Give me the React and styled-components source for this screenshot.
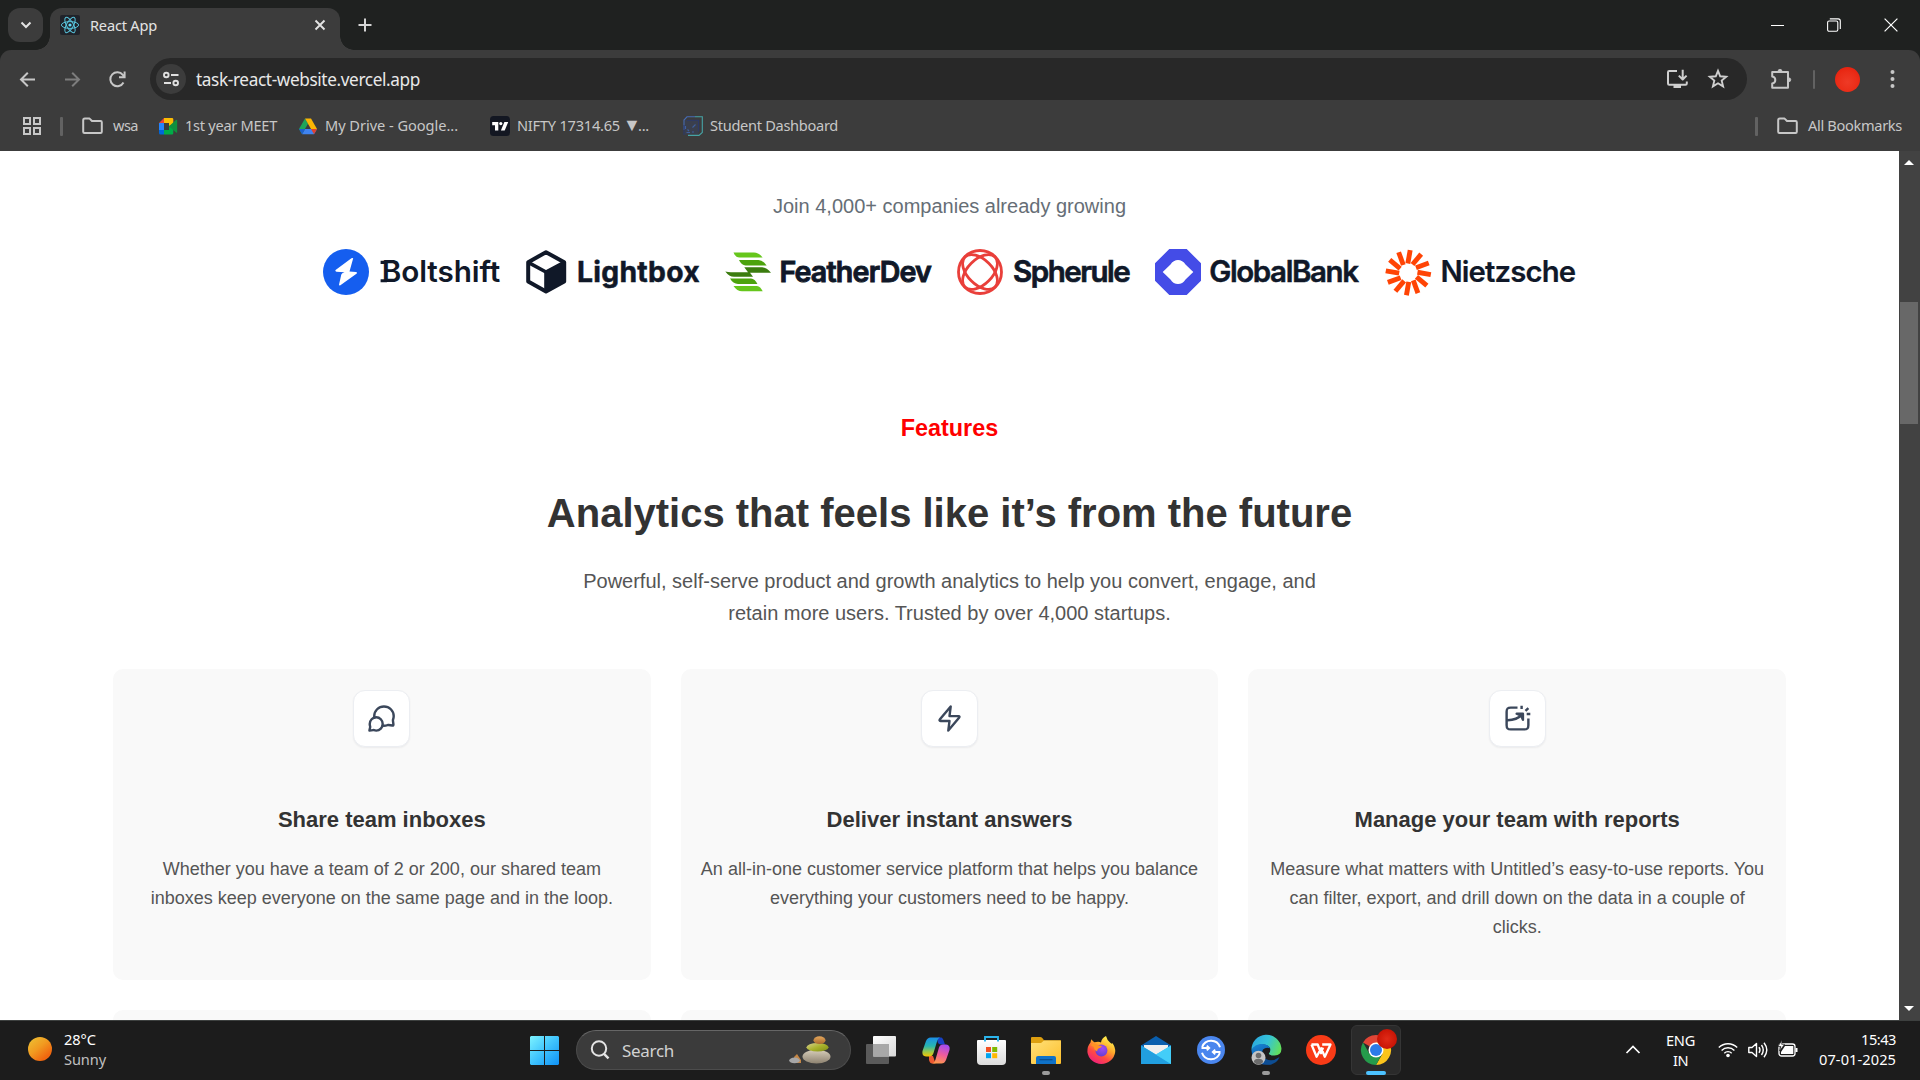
import React, { useLayoutEffect, useRef, useState } from "react";
import styled, { createGlobalStyle } from "styled-components";

const GlobalStyle = createGlobalStyle`
  * { box-sizing: border-box; }
  body { margin: 0; background: #fff; overflow: hidden; }
  svg { display: block; flex: none; overflow: visible; }
`;

const uiFont = `"Segoe UI", "Noto Sans", "Open Sans", sans-serif`;
const pageFont = `Arial, "Liberation Sans", sans-serif`;

const Screen = styled.div`
  width: 1920px;
  height: 1080px;
  display: flex;
  flex-direction: column;
  overflow: hidden;
  font-family: ${uiFont};
`;

/* ---------- text that keeps a fixed measure ---------- */
const LabelText = styled.span`
  display: block;
  width: max-content;
  white-space: nowrap;
  flex: none;
  font-size: ${(p) => p.$size || 14.6}px;
  line-height: 20px;
  color: ${(p) => p.$color || "#c7c7c7"};
  margin-left: ${(p) => p.$left || 0}px;
  transform: translateY(${(p) => p.$shift || 0}px);
`;

function Label({ width, size, color, left, shift, children }) {
  const ref = useRef(null);
  const [spacing, setSpacing] = useState(0);
  useLayoutEffect(() => {
    const natural = ref.current.getBoundingClientRect().width;
    setSpacing((width - natural) / children.length);
  }, [width, children]);
  return (
    <LabelText ref={ref} $size={size} $color={color} $left={left} $shift={shift} style={{ letterSpacing: spacing }}>
      {children}
    </LabelText>
  );
}

/* ---------- browser chrome ---------- */
const TabStrip = styled.div`
  height: 50px;
  flex: none;
  background: #1f2120;
  display: flex;
  padding: 8px 0 0 8px;
`;
const TabSearch = styled.div`
  width: 35px;
  height: 34px;
  border-radius: 12px;
  background: #3c3c3c;
  display: flex;
  align-items: center;
  justify-content: center;
`;
const Tab = styled.div`
  position: relative;
  width: 290px;
  height: 42px;
  margin-left: 7px;
  padding: 0 14px 8px 10px;
  border-radius: 12px 12px 0 0;
  background: #3c3c3c;
  display: flex;
  align-items: center;
  gap: 10px;
  &::before,
  &::after {
    content: "";
    position: absolute;
    bottom: 0;
    width: 14px;
    height: 14px;
  }
  &::before {
    left: -14px;
    background: radial-gradient(circle at 0 0, transparent 13.5px, #3c3c3c 14px);
  }
  &::after {
    right: -14px;
    background: radial-gradient(circle at 100% 0, transparent 13.5px, #3c3c3c 14px);
  }
`;
const Spacer = styled.div`
  flex: 1;
`;
const NewTab = styled.div`
  width: 50px;
  height: 34px;
  display: flex;
  align-items: center;
  justify-content: center;
`;
const WindowButtons = styled.div`
  display: flex;
  height: 34px;
  margin-left: auto;
  padding-right: 1px;
`;
const WindowButton = styled.div`
  width: ${(p) => p.$width || 57}px;
  display: flex;
  align-items: center;
  justify-content: center;
`;
const ChromeBack = styled.div`
  background: #1f2120;
  flex: none;
`;
const Toolbar = styled.div`
  height: 58px;
  border-radius: 11px 11px 0 0;
  background: #3c3c3c;
  display: flex;
  align-items: center;
  padding: 0 20px 0 17px;
`;
const NavButtons = styled.div`
  display: flex;
  width: 133px;
  gap: 24px;
`;
const UrlBar = styled.div`
  width: 1597px;
  height: 42px;
  border-radius: 21px;
  background: #282828;
  display: flex;
  align-items: center;
  padding: 0 18px 0 6px;
`;
const SiteInfo = styled.div`
  width: 30px;
  height: 30px;
  border-radius: 50%;
  background: #3c3c3c;
  display: flex;
  align-items: center;
  justify-content: center;
`;
const UrlActions = styled.div`
  display: flex;
  gap: 19px;
  margin-left: auto;
`;
const ToolbarEnd = styled.div`
  flex: 1;
  display: flex;
  align-items: center;
  padding-left: 23px;
`;
const Divider = styled.div`
  width: ${(p) => p.$width}px;
  height: 19px;
  border-radius: 1px;
  background: #626262;
  margin-left: ${(p) => p.$left || 0}px;
`;
const Avatar = styled.div`
  width: 25px;
  height: 25px;
  border-radius: 50%;
  margin: 0 26px 0 20px;
  background: radial-gradient(circle at 50% 60%, #ee3a26 0, #ea2d18 50%, #e51a08 100%);
`;
const Bookmarks = styled.div`
  height: 43px;
  background: #3c3c3c;
  display: flex;
  align-items: center;
  padding: 0 18px 7px 23px;
`;
const Bookmark = styled.div`
  display: flex;
  align-items: center;
  margin-left: ${(p) => p.$left}px;
`;

/* ---------- page ---------- */
const Viewport = styled.div`
  height: 869px;
  flex: none;
  display: flex;
`;
const Page = styled.main`
  width: 1899px;
  height: 869px;
  overflow: hidden;
  background: #fff;
  font-family: ${pageFont};
  text-align: center;
  display: flex;
  flex-direction: column;
  align-items: center;
  padding-top: 39px;
`;
const Join = styled.p`
  margin: 0;
  font-size: 20px;
  line-height: 32px;
  color: #666e76;
`;
const Logos = styled.div`
  display: flex;
  gap: 24px;
  margin-top: 25px;
`;
const Eyebrow = styled.h3`
  margin: 113px 0 0;
  font-size: 23.4px;
  line-height: 36px;
  color: #ff0000;
`;
const Heading = styled.h2`
  margin: 43px 0 0;
  font-size: 40px;
  line-height: 48px;
  color: #333;
`;
const Lead = styled.p`
  width: 750px;
  margin: 28px 0 40px;
  font-size: 20px;
  line-height: 32px;
  color: #555;
`;
const Cards = styled.div`
  width: 1673px;
  flex: none;
  display: grid;
  grid-template-columns: repeat(3, 1fr);
  grid-auto-rows: 311px;
  gap: 30px;
`;
const Card = styled.article`
  border-radius: 10px;
  background: #f9f9f9;
  padding: 21px 18px;
  display: flex;
  flex-direction: column;
  align-items: center;
`;
const IconBox = styled.div`
  width: 57px;
  height: 57px;
  flex: none;
  border: 1px solid #eceef2;
  border-radius: 12px;
  background: #fff;
  box-shadow: 0 1px 2px rgba(16, 24, 40, 0.06);
  display: flex;
  align-items: center;
  justify-content: center;
`;
const CardTitle = styled.h4`
  margin: 58px 0 0;
  font-size: 22px;
  line-height: 30px;
  color: #333;
`;
const CardText = styled.p`
  margin: 20px 0 0;
  font-size: 18px;
  line-height: 29px;
  color: #555;
`;
const ScrollTrack = styled.div`
  width: 21px;
  background: #424242;
  display: flex;
  flex-direction: column;
  align-items: center;
  padding: 9px 1px 9px 0;
`;
const ScrollThumb = styled.div`
  width: 18px;
  height: 122px;
  margin-top: 137px;
  background: #686868;
`;
const Arrow = styled.div`
  border: 5px solid transparent;
  border-${(p) => (p.$up ? "top" : "bottom")}: 0;
  border-${(p) => (p.$up ? "bottom" : "top")}: 5px solid #fff;
  margin-top: ${(p) => (p.$up ? 0 : "auto")};
`;

/* ---------- taskbar ---------- */
const Taskbar = styled.footer`
  height: 60px;
  flex: none;
  background: #1c1c1c;
  border-top: 1px solid #3d403f;
  display: flex;
  align-items: center;
  padding-bottom: 1px;
`;
const Weather = styled.div`
  width: 530px;
  padding-left: 28px;
  display: flex;
  align-items: center;
  gap: 12px;
`;
const Sun = styled.div`
  width: 24px;
  height: 24px;
  border-radius: 50%;
  margin-top: -3px;
  background: linear-gradient(140deg, #ecc033 5%, #f19a20 45%, #f0660f 80%);
`;
const Stack = styled.div`
  display: flex;
  flex-direction: column;
  align-items: ${(p) => p.$align || "flex-start"};
  margin-left: ${(p) => p.$left || 0}px;
`;
const SearchBox = styled.div`
  width: 275px;
  height: 40px;
  margin-left: 17px;
  margin-right: 2.5px;
  border-radius: 20px;
  border: 1px solid #4c4c4c;
  border-top-color: #666;
  background: #3b3b3b;
  display: flex;
  align-items: center;
  padding: 0 19px 0 13px;
`;
const AppSlot = styled.div`
  position: relative;
  width: 55px;
  height: 58px;
  display: flex;
  align-items: center;
  justify-content: center;
  &::after {
    content: "";
    display: ${(p) => (p.$mark ? "block" : "none")};
    position: absolute;
    bottom: 4px;
    width: ${(p) => (p.$mark === "active" ? 20 : 8)}px;
    height: 4px;
    border-radius: 2px;
    background: ${(p) => (p.$mark === "active" ? "#4cc2ff" : "#9a9a9a")};
  }
`;
const ActiveTile = styled.div`
  width: 50px;
  height: 50px;
  border-radius: 6px;
  border: 1px solid #353535;
  background: #2a2a2a;
  display: flex;
  align-items: center;
  justify-content: center;
`;
const Tray = styled.div`
  margin-left: auto;
  padding-right: 24px;
  display: flex;
  align-items: center;
`;
const TrayIcons = styled.div`
  display: flex;
  gap: 10px;
  margin: 0 21px 0 23px;
`;

/* ---------- small icons ---------- */
const line = { fill: "none", stroke: "#c7c7c7", strokeWidth: 2 };

const Folder = () => (
  <svg width="21" height="18" viewBox="0 0 21 18" {...line} strokeLinejoin="round">
    <path d="M1.2 3.4V14.8Q1.2 16 2.4 16H18.6Q19.8 16 19.8 14.8V5.2Q19.8 4 18.6 4H10L7.6 1.6H2.8Q1.2 1.6 1.2 3.4Z" />
  </svg>
);

const ReactMark = () => (
  <svg width="20" height="20" viewBox="0 0 20 20">
    <rect width="20" height="20" rx="2" fill="#20232a" />
    <g fill="none" stroke="#58c4dc" strokeWidth="1">
      <ellipse cx="10" cy="10" rx="8.6" ry="3.4" />
      <ellipse cx="10" cy="10" rx="8.6" ry="3.4" transform="rotate(60 10 10)" />
      <ellipse cx="10" cy="10" rx="8.6" ry="3.4" transform="rotate(120 10 10)" />
    </g>
    <circle cx="10" cy="10" r="1.6" fill="#61dafb" />
  </svg>
);

const MeetIcon = () => (
  <svg width="19" height="17" viewBox="0 0 19 17">
    <path d="M0 5L5 0V5Z" fill="#ea4335" />
    <path d="M5 0H13Q14.3 0 14.3 1.3V6L10 8V5H5Z" fill="#fbbc04" />
    <path d="M0 5H5V12H0Z" fill="#2684fc" />
    <path d="M0 12H5V16.5H1.5Q0 16.5 0 15Z" fill="#0066da" />
    <path d="M5 12H10V8L14.3 11V15.2Q14.3 16.5 13 16.5H5Z" fill="#00ac47" />
    <path d="M10 8.3L17 2Q18.2 1.4 18.2 2.6V14Q18.2 15.2 17 14.5Z" fill="#0f8f3e" />
  </svg>
);

const DriveIcon = () => (
  <svg width="18" height="17" viewBox="0 0 18 17">
    <path d="M6 0.5L9 5.8L3 16L0 11Z" fill="#1ea45a" />
    <path d="M6 0.5H12L18 11H12Z" fill="#fbb604" />
    <path d="M3 16.3L6 11H18L15 16.3Z" fill="#3f83f0" />
    <path d="M18 11L15 16.3L12 11Z" fill="#e0402f" />
    <path d="M0 11H6L3 16.3Z" fill="#1c5fd0" />
  </svg>
);

const TradingIcon = () => (
  <svg width="20" height="20" viewBox="0 0 20 20">
    <rect width="20" height="20" rx="3.5" fill="#131722" />
    <path d="M2.2 6H8.3V14.6H5V9.2H2.2Z" fill="#fff" />
    <circle cx="10.8" cy="7.6" r="1.6" fill="#fff" />
    <path d="M14.4 6H18.2L14.7 14.6H10.9Z" fill="#fff" />
  </svg>
);

const StudentIcon = () => (
  <svg width="20" height="20" viewBox="0 0 20 20" fill="none">
    <rect x="1.5" y="4" width="14" height="14.5" fill="#3a3f4d" />
    <path d="M1 14V4L4 0.8H12" stroke="#466bb5" strokeWidth="1.1" />
    <path d="M12 0.8H19.3V16.5L16 19.4H5" stroke="#46a3a5" strokeWidth="1.1" />
    <path d="M4 4.3H15.6V15.5M1 9V19" stroke="#2d3a6b" strokeWidth="1.1" />
    <path d="M2.5 10V13M3.5 16.5H7M4.5 13.5L6 15M9.5 11.5L12.5 8.5M9 16H11" stroke="#3f5f9e" strokeWidth="1.1" />
  </svg>
);

/* ---------- company logos ---------- */
const INK = "#101828";

const Wordmark = ({ x, width, size = 29.5, weight = 600, y = 35.3, bold = 0.5, children }) => (
  <text
    x={x}
    y={y}
    textLength={width}
    lengthAdjust="spacing"
    fontFamily={`Inter, "Liberation Sans", sans-serif`}
    fontSize={size}
    fontWeight={weight}
    fill={INK}
    stroke={INK}
    strokeWidth={bold}
  >
    {children}
  </text>
);

const Boltshift = () => (
  <svg width="178" height="50" viewBox="0 0 178 50">
    <circle cx="23" cy="25" r="23" fill="#155eef" />
    <path
      d="M30.2 11.2Q29.6 10.6 28.4 11.3L12.6 23Q11.6 24.3 13.4 24.7L21.5 25.3Q18.7 26 18.3 27.4L16 37.8Q16.2 39 17.4 38.3L33.8 26.6Q34.6 25.3 33 25L26.5 24.6Z"
      fill="#fff"
    />
    <path d="M57.6 13.8H64V16.9H57.6ZM57.6 32.2H64V35.3H57.6Z" fill={INK} />
    <Wordmark x={58.8} width={118.5} size={29.7} bold={0}>Boltshift</Wordmark>
  </svg>
);

const Lightbox = () => (
  <svg width="176" height="50" viewBox="0 0 176 50">
    <path
      d="M21 5.2L39.2 15.2V34.5L21 44.5L3.2 34.5V15.2Z"
      fill="none"
      stroke={INK}
      strokeWidth="4"
      strokeLinejoin="round"
    />
    <path d="M3.2 15.4L21 25L39.2 15.4" fill="none" stroke={INK} strokeWidth="3.6" />
    <path d="M19.2 24.5L39.2 15V34.8L21 44.8H19.2Z" fill={INK} />
    <Wordmark x={52} width={122.7} weight={700} size={28.3}>Lightbox</Wordmark>
  </svg>
);

const FeatherDev = () => (
  <svg width="208" height="50" viewBox="0 0 208 50">
    <path d="M8.5 5.4H29Q34 5.5 37.6 10.6H14.5Q10.5 10.5 8.5 5.4Z" fill="#66c61c" />
    <path d="M14 13H33.5Q38 13.2 41.6 18.4H20.5Q16.5 18.3 14 13Z" fill="#4ca30d" />
    <path d="M19.3 20.3H37Q42 20.6 46 25.7H25L28 29.7H9Q4 29.6 0.3 24.4Q3 25.2 6 25.2H23Z" fill="#3b7c0f" />
    <path d="M5 31.6H26Q30 31.9 32.4 37H13Q8 36.8 5 31.6Z" fill="#4ca30d" />
    <path d="M8.5 39H32Q35.5 39.4 37.7 44.3H17Q12 44.2 8.5 39Z" fill="#66c61c" />
    <Wordmark x={54.4} width={152.5} weight={600} size={28.6} bold={0.9}>FeatherDev</Wordmark>
  </svg>
);

const Spherule = () => (
  <svg width="174" height="50" viewBox="0 0 174 50">
    <g fill="none" stroke="#e93f3a" strokeWidth="2.8">
      <circle cx="23" cy="25" r="21.5" />
      <ellipse cx="23" cy="25" rx="21.2" ry="12.4" transform="rotate(45 23 25)" />
      <ellipse cx="23" cy="25" rx="21.2" ry="12.4" transform="rotate(-45 23 25)" />
    </g>
    <Wordmark x={56} width={117.8} weight={600} size={29.5} bold={0.7}>Spherule</Wordmark>
  </svg>
);

const GlobalBank = () => (
  <svg width="206" height="50" viewBox="0 0 206 50">
    <path
      fillRule="evenodd"
      d="M14.3 2H31.7L46 16.3V33.7L31.7 48H14.3L0 33.7V16.3ZM7.7 25L15.5 32.5C19 38.5 27 38.5 30.5 32.5L38.3 25L30.5 17.5C27 11.5 19 11.5 15.5 17.5Z"
      fill="#444ce7"
    />
    <Wordmark x={54.2} width={149.8} weight={600} size={29.5}>GlobalBank</Wordmark>
  </svg>
);

const Nietzsche = () => (
  <svg width="191" height="50" viewBox="0 0 191 50">
    <g stroke="#ff4405" strokeWidth="4.9">
      {Array.from({ length: 12 }, (_, i) => (
        <line key={i} x1="22.2" y1="16.6" x2="23.6" y2="3.1" transform={`rotate(${i * 30 + 4} 23.3 25.7)`} />
      ))}
    </g>
    <Wordmark x={55.4} width={135.7} weight={600} size={29.3} bold={0.2}>Nietzsche</Wordmark>
  </svg>
);

/* ---------- feature icons ---------- */
const glyph = {
  width: 29,
  height: 29,
  viewBox: "0 0 24 24",
  fill: "none",
  stroke: "#3b475b",
  strokeWidth: 2,
  strokeLinecap: "round",
  strokeLinejoin: "round",
};

const ChatIcon = () => (
  <svg {...glyph}>
    <path d="M6.09 11.23C6.03 10.83 6 10.42 6 10C6 5.58 9.6 2 14.05 2C18.5 2 22.1 5.58 22.1 10C22.1 11 21.92 11.95 21.58 12.83C21.45 13.2 21.43 13.3 21.47 13.69L21.87 16.96C21.95 17.7 21.7 17.95 20.96 17.85L17.78 17.38C17.4 17.33 17.25 17.35 16.9 17.49C16 17.82 15.05 18 14.05 18C13.63 18 13.22 17.97 12.82 17.9" />
    <path d="M7.63 22C10.6 22 13 19.54 13 16.5C13 13.46 10.6 11 7.63 11C4.67 11 2.26 13.46 2.26 16.5C2.26 17.11 2.36 17.7 2.54 18.25C2.7 18.75 2.7 18.85 2.61 19.24L2 22L4.99 21.59C5.35 21.55 5.5 21.56 5.88 21.7C6.43 21.9 7.02 22 7.63 22Z" />
  </svg>
);

const ZapIcon = () => (
  <svg {...glyph}>
    <path d="M13 2L4.1 12.7C3.5 13.4 3.6 14 4.6 14H12L11 22L19.9 11.3C20.5 10.6 20.4 10 19.4 10H12L13 2Z" />
  </svg>
);

const ReportIcon = () => (
  <svg {...glyph} strokeLinecap="butt">
    <path d="M12 3H6.4C3.8 3 3 3.8 3 6.4V17.6C3 20.2 3.8 21 6.4 21H17.6C20.2 21 21 20.2 21 17.6V12" />
    <path d="M3 13.4C8.5 13.6 12.5 12.2 16 8.6M11.3 8H16.5V13L15 9.6Z" />
    <path d="M15.4 1.4V4.2M18.6 5.6L21 3.4M19.6 8.3H22.6" />
  </svg>
);

/* ---------- taskbar icons ---------- */
const WindowsIcon = () => (
  <svg width="29" height="29" viewBox="0 0 29 29">
    <defs>
      <linearGradient id="win" x1="0" y1="0" x2="29" y2="29" gradientUnits="userSpaceOnUse">
        <stop offset="0" stopColor="#7df3ff" />
        <stop offset="0.5" stopColor="#3fc3fd" />
        <stop offset="1" stopColor="#0f91f5" />
      </linearGradient>
    </defs>
    <path d="M1 0H14V14H0V1ZM15 0H28L29 1V14H15ZM0 15H14V29H1L0 28ZM15 15H29V28L28 29H15Z" fill="url(#win)" />
  </svg>
);

const Pebbles = () => (
  <svg width="42" height="28" viewBox="0 0 42 28">
    <defs>
      <linearGradient id="stone" x1="0" y1="0" x2="0" y2="1">
        <stop offset="0" stopColor="#d8cebb" />
        <stop offset="1" stopColor="#8d8270" />
      </linearGradient>
      <linearGradient id="moss" x1="0" y1="0" x2="1" y2="1">
        <stop offset="0" stopColor="#d9cf93" />
        <stop offset="0.5" stopColor="#aab32c" />
        <stop offset="1" stopColor="#7d8c16" />
      </linearGradient>
      <linearGradient id="clay" x1="0" y1="0" x2="0" y2="1">
        <stop offset="0" stopColor="#e3a65c" />
        <stop offset="1" stopColor="#a9682a" />
      </linearGradient>
    </defs>
    <path d="M5 21L8 18L12 24V27H7Z" fill="#c48645" />
    <ellipse cx="5.5" cy="24.4" rx="5.3" ry="2.8" fill="#a7a7a8" />
    <ellipse cx="27.5" cy="20.6" rx="14" ry="7" fill="url(#stone)" />
    <ellipse cx="28.5" cy="11.2" rx="11" ry="4.3" fill="url(#moss)" />
    <ellipse cx="30.5" cy="4.2" rx="6" ry="3.9" fill="url(#clay)" />
  </svg>
);

const TaskViewIcon = () => (
  <svg width="30" height="28" viewBox="0 0 30 28">
    <defs>
      <linearGradient id="pane" x1="0" y1="0" x2="1" y2="1">
        <stop offset="0" stopColor="#fff" />
        <stop offset="1" stopColor="#d8d8d8" />
      </linearGradient>
    </defs>
    <rect y="8" width="23" height="20" rx="1" fill="#5b5b5b" />
    <rect x="7" width="23" height="20.5" rx="1" fill="url(#pane)" />
    <rect x="7" y="8" width="16" height="12.5" fill="#a8a8a8" />
  </svg>
);

const CopilotIcon = () => (
  <svg width="28" height="27" viewBox="0 0 28 27">
    <defs>
      <linearGradient id="cpA" x1="0" y1="0" x2="0" y2="1">
        <stop offset="0" stopColor="#1b8fe8" />
        <stop offset="0.45" stopColor="#27b5b0" />
        <stop offset="0.75" stopColor="#9bc94b" />
        <stop offset="1" stopColor="#f6c400" />
      </linearGradient>
      <linearGradient id="cpB" x1="0.6" y1="0" x2="0.3" y2="1">
        <stop offset="0" stopColor="#a44bf0" />
        <stop offset="0.5" stopColor="#ee5c9b" />
        <stop offset="1" stopColor="#ff9a4a" />
      </linearGradient>
    </defs>
    <path d="M16 0.5H19.5Q21 1 21.8 4L23 7.5H19Q16.5 7.5 15.5 5Z" fill="#1741c4" />
    <path d="M7 19H11L13.5 26.5H10Q8 26.5 7 23Z" fill="#ee5a32" />
    <path d="M8.5 0.5H18Q16 1 15 4.5L11.5 16Q10.5 19.5 7 19.5H4Q-0.5 19 0.5 14L4 4Q5.5 0.5 8.5 0.5Z" fill="url(#cpA)" />
    <path d="M19.5 26.5H10Q12.5 26 13.5 22.5L17 10.5Q18 7.5 21 7.5H24Q28.5 8 27.5 13L24 23Q22.5 26.5 19.5 26.5Z" fill="url(#cpB)" />
  </svg>
);

const StoreIcon = () => (
  <svg width="29" height="29" viewBox="0 0 29 29">
    <defs>
      <linearGradient id="bag" x1="0" y1="0" x2="0" y2="1">
        <stop offset="0" stopColor="#fff" />
        <stop offset="1" stopColor="#dcdcdc" />
      </linearGradient>
    </defs>
    <path d="M0 5Q0 4 1 4H28Q29 4 29 5V25Q29 29 25 29H4Q0 29 0 25Z" fill="url(#bag)" />
    <path d="M8 5.5V1H21V5.5" fill="none" stroke="#2bb5ec" strokeWidth="1.9" />
    <rect x="9" y="11" width="5" height="5" fill="#f25022" />
    <rect x="15.2" y="11" width="5" height="5" fill="#7fba00" />
    <rect x="9" y="17.2" width="5" height="5" fill="#00a4ef" />
    <rect x="15.2" y="17.2" width="5" height="5" fill="#ffb900" />
  </svg>
);

const ExplorerIcon = () => (
  <svg width="30" height="27" viewBox="0 0 30 27">
    <defs>
      <linearGradient id="fold" x1="0" y1="0" x2="1" y2="1">
        <stop offset="0" stopColor="#ffe07a" />
        <stop offset="1" stopColor="#fdbf2b" />
      </linearGradient>
    </defs>
    <path d="M0 1Q0 0 1 0H9Q10.5 0 11.5 1.2L13 3.3H30V10H0Z" fill="#dd9f10" />
    <path d="M0 6H10L13 3.6H29Q30 3.6 30 4.6V26Q30 27 29 27H1Q0 27 0 26Z" fill="url(#fold)" />
    <path d="M5 27V21Q5 19 7 19H23Q25 19 25 21V27Z" fill="#0f72c8" />
    <path d="M8.5 22.7H21.5" stroke="#0a4c8c" strokeWidth="1.2" />
  </svg>
);

const FirefoxIcon = () => (
  <svg width="29" height="29" viewBox="0 0 29 29">
    <defs>
      <linearGradient id="fx" x1="0.8" y1="0.1" x2="0.25" y2="1">
        <stop offset="0" stopColor="#fff04e" />
        <stop offset="0.35" stopColor="#ffa62a" />
        <stop offset="0.65" stopColor="#ff4b42" />
        <stop offset="1" stopColor="#ee1c80" />
      </linearGradient>
      <radialGradient id="fxo" cx="0.6" cy="0.3" r="0.8">
        <stop offset="0" stopColor="#a34df0" />
        <stop offset="1" stopColor="#5b3bd0" />
      </radialGradient>
    </defs>
    <path
      d="M19 0Q20 4 23 6.5Q25 8.5 25.3 7Q28.5 11 28.2 16A14 13.6 0 0 1 0.4 16Q0.2 10 3.5 6.5Q3.7 4.5 4.6 3.2Q5.8 5.8 7.5 6.2Q12 5.4 14 6.4Q14.5 2.5 19 0Z"
      fill="url(#fx)"
    />
    <circle cx="14.4" cy="14.6" r="6" fill="url(#fxo)" />
    <path d="M3.5 9Q7 6.5 12 9.5L15 10Q14.6 12 11.5 12.4Q10 13.5 10.2 15.6Q7 14 6.8 11Z" fill="#ff9224" />
  </svg>
);

const MailIcon = () => (
  <svg width="30" height="28" viewBox="0 0 30 28">
    <path d="M0 9.5L15 0L30 9.5V20H0Z" fill="#0a5fae" />
    <path d="M3 9H27V16L15 20L3 16Z" fill="#efefef" />
    <path d="M0 9.5L15 18.5L30 9.5V28H0Z" fill="#34c3f4" />
    <path d="M0 9.5L30 28H0Z" fill="#219fe0" />
    <path d="M15 18.5L30 28V9.5Z" fill="#43cdf8" />
  </svg>
);

const SyncIcon = () => (
  <svg width="28" height="28" viewBox="0 0 28 28" fill="none" stroke="#fff" strokeWidth="2">
    <circle cx="14" cy="14" r="14" fill="#4a86ee" stroke="none" />
    <path d="M5.2 11A9.4 9.4 0 0 1 23 11.3M22.8 17A9.4 9.4 0 0 1 5 16.7" />
    <path d="M4.5 12H11.5M9.8 9.6L12.3 12L9.8 14.4M23.5 16H16.5M18.2 13.6L15.7 16L18.2 18.4" strokeWidth="1.8" />
  </svg>
);

const EdgeIcon = () => (
  <svg width="31" height="30" viewBox="0 0 31 30">
    <defs>
      <linearGradient id="edA" x1="0" y1="0.3" x2="1" y2="0.6">
        <stop offset="0" stopColor="#2aa7e0" />
        <stop offset="0.5" stopColor="#35c3d8" />
        <stop offset="1" stopColor="#62e05a" />
      </linearGradient>
      <linearGradient id="edB" x1="0" y1="0" x2="0.4" y2="1">
        <stop offset="0" stopColor="#1888d8" />
        <stop offset="1" stopColor="#0c4f9e" />
      </linearGradient>
    </defs>
    <path d="M0.5 15A15 15 0 0 1 30.4 13Q31 20 23.5 20.5Q18 20.5 17.8 18.6Q20 16.5 19 13Q17 9.5 12 9.5Q5 9.5 0.5 15Z" fill="url(#edA)" />
    <path d="M0.5 15Q4 8.5 11.5 9Q17.5 9.5 19 13.3Q15 11.6 12 14.5Q9.5 19 12.5 23.5Q16 28 21.5 29Q10 32 3.5 24Q0.3 20 0.5 15Z" fill="url(#edB)" />
    <path d="M12 15Q10 20.5 15 24Q21 27.5 28.5 22Q26.5 27.5 20 29.6Q10 29.5 9.5 21Q9.8 17 12 15Z" fill="#0d4d92" />
    <circle cx="7.5" cy="22.7" r="7" fill="#c4c4c4" />
    <circle cx="7.5" cy="20.5" r="2.8" fill="#6c6c6c" />
    <path d="M2.8 27Q3.2 23.8 7.5 23.8Q11.8 23.8 12.2 27Q10 29.6 7.5 29.6Q5 29.6 2.8 27Z" fill="#6c6c6c" />
  </svg>
);

const WpsIcon = () => (
  <svg width="30" height="30" viewBox="0 0 30 30">
    <circle cx="15" cy="15" r="15" fill="#f93b17" />
    <path
      d="M5.5 9.5H11.7L15 18.2L17 12.6M5.5 9.5L10.6 21.7L15.2 13.2L18.8 21.7L24.5 9.5H16.2"
      fill="none"
      stroke="#fff"
      strokeWidth="2.3"
      strokeLinejoin="round"
    />
  </svg>
);

const ChromeIcon = () => (
  <svg width="38" height="38" viewBox="-2 2 38 38">
    <defs>
      <radialGradient id="dot">
        <stop offset="0" stopColor="#e02a17" />
        <stop offset="1" stopColor="#c81405" />
      </radialGradient>
    </defs>
    <path d="M17 21L4 13.5A15 15 0 0 1 30 13.5Z" fill="#e04536" />
    <path d="M30 13.5H17V21L23.5 24.8L17 36A15 15 0 0 0 30 13.5Z" fill="#fcc41c" />
    <path d="M17 36A15 15 0 0 1 4 13.5L10.5 24.8L17 28.5L23 25Z" fill="#259b4b" />
    <circle cx="17" cy="21" r="7.5" fill="#fff" />
    <circle cx="17" cy="21" r="6" fill="#2b7be8" />
    <circle cx="28" cy="10" r="10" fill="url(#dot)" />
  </svg>
);

const features = [
  {
    icon: <ChatIcon />,
    title: "Share team inboxes",
    text: "Whether you have a team of 2 or 200, our shared team inboxes keep everyone on the same page and in the loop.",
  },
  {
    icon: <ZapIcon />,
    title: "Deliver instant answers",
    text: "An all-in-one customer service platform that helps you balance everything your customers need to be happy.",
  },
  {
    icon: <ReportIcon />,
    title: "Manage your team with reports",
    text: "Measure what matters with Untitled’s easy-to-use reports. You can filter, export, and drill down on the data in a couple of clicks.",
  },
];

function BrowserChrome() {
  return (
    <>
      <TabStrip>
        <TabSearch>
          <svg width="12" height="12" viewBox="0 0 12 12" fill="none" stroke="#e3e3e3" strokeWidth="2">
            <path d="M1.5 3.5L6 8L10.5 3.5" />
          </svg>
        </TabSearch>
        <Tab>
          <ReactMark />
          <Label width={67} size={14.6} color="#e3e3e3">React App</Label>
          <Spacer />
          <svg width="12" height="12" viewBox="0 0 12 12" fill="none" stroke="#e3e3e3" strokeWidth="1.9">
            <path d="M1.5 1.5L10.5 10.5M10.5 1.5L1.5 10.5" />
          </svg>
        </Tab>
        <NewTab>
          <svg width="14" height="14" viewBox="0 0 14 14" fill="none" stroke="#d5d5d5" strokeWidth="2">
            <path d="M7 .5V13.5M.5 7H13.5" />
          </svg>
        </NewTab>
        <WindowButtons>
          <WindowButton $width={56}>
            <svg width="13" height="13" viewBox="0 0 13 13">
              <path d="M0 6H13V7H0Z" fill="#fff" />
            </svg>
          </WindowButton>
          <WindowButton>
            <svg width="14" height="14" viewBox="0 0 14 14" fill="none" stroke="#fff" strokeWidth="1.1">
              <rect x="0.6" y="3" width="10.2" height="10.2" rx="1.5" />
              <path d="M2.8 0.9H11.2Q13.3 0.9 13.3 3V11" />
            </svg>
          </WindowButton>
          <WindowButton>
            <svg width="14" height="14" viewBox="0 0 14 14" fill="none" stroke="#fff" strokeWidth="1.2">
              <path d="M.6 .6L13.4 13.4M13.4 .6L.6 13.4" />
            </svg>
          </WindowButton>
        </WindowButtons>
      </TabStrip>
      <ChromeBack>
        <Toolbar>
          <NavButtons>
            <svg width="21" height="21" viewBox="0 0 21 21" {...line}>
              <path d="M18 10.5H4.5M10.8 3.7L4 10.5L10.8 17.3" />
            </svg>
            <svg width="21" height="21" viewBox="0 0 21 21" fill="none" stroke="#7d7d7d" strokeWidth="2">
              <path d="M3 10.5H16.5M10.2 3.7L17 10.5L10.2 17.3" />
            </svg>
            <svg width="21" height="21" viewBox="0 0 21 21" {...line}>
              <path d="M16.5 13.5A7 7 0 1 1 15.8 5.8L17.5 7.8M17.6 2.6V8.3H12" />
            </svg>
          </NavButtons>
          <UrlBar>
            <SiteInfo>
              <svg width="18" height="16" viewBox="0 0 18 16" fill="none" stroke="#e0e0e0" strokeWidth="1.9">
                <circle cx="4.3" cy="4" r="2.3" />
                <path d="M9 4H16.5M2 12H9" />
                <circle cx="13.7" cy="12" r="2.3" />
              </svg>
            </SiteInfo>
            <Label width={224} size={17.2} color="#e8e8e8" left={10} shift={1}>task-react-website.vercel.app</Label>
            <UrlActions>
              <svg width="22" height="22" viewBox="0 0 22 22" {...line} stroke="#cfcfcf" strokeLinejoin="round">
                <path d="M11 3H3.2Q2 3 2 4.2V15.6Q2 16.8 3.2 16.8H19.6Q20.8 16.8 20.8 15.6V13.5M16.7 1.8V11M12.8 7.6L16.7 11.5L20.6 7.6" />
                <path d="M7.5 18.5H15" strokeWidth="3" />
              </svg>
              <svg width="22" height="22" viewBox="0 0 22 22" {...line} stroke="#cfcfcf">
                <path d="M11 2.8L13.2 8.3L19.2 8.8L14.7 12.6L16.1 18.4L11 15.3L5.9 18.4L7.3 12.6L2.8 8.8L8.8 8.3Z" strokeWidth="1.9" />
              </svg>
            </UrlActions>
          </UrlBar>
          <ToolbarEnd>
            <svg width="22" height="22" viewBox="0 0 22 22" {...line} strokeLinejoin="round">
              <path d="M2.2 4H18V19.8H2.2V15.5Q5.3 15 5.3 12Q5.3 9 2.2 8.5Z" />
              <path d="M8 3.5Q8 1.3 10 1.3Q12 1.3 12 3.5ZM18.5 9.8Q20.8 9.8 20.8 11.8Q20.8 13.8 18.5 13.8Z" fill="#c7c7c7" strokeWidth="0.8" />
            </svg>
            <Divider $width={2} $left={21} />
            <Avatar />
            <svg width="14" height="20" viewBox="0 0 14 20" fill="#c7c7c7">
              <circle cx="6.5" cy="3" r="2" />
              <circle cx="6.5" cy="10" r="2" />
              <circle cx="6.5" cy="17" r="2" />
            </svg>
          </ToolbarEnd>
        </Toolbar>
        <Bookmarks>
          <svg width="18" height="18" viewBox="0 0 18 18" {...line}>
            <path d="M1 1H7V7H1ZM11 1H17V7H11ZM1 11H7V17H1ZM11 11H17V17H11Z" />
          </svg>
          <Bookmark $left={19}>
            <Divider $width={3} />
          </Bookmark>
          <Bookmark $left={19}>
            <Folder />
            <Label width={25} left={10} shift={-1}>wsa</Label>
          </Bookmark>
          <Bookmark $left={21}>
            <MeetIcon />
            <Label width={92} left={7} shift={-1}>1st year MEET</Label>
          </Bookmark>
          <Bookmark $left={22}>
            <DriveIcon />
            <Label width={133} left={8} shift={-1}>My Drive - Google...</Label>
          </Bookmark>
          <Bookmark $left={32}>
            <TradingIcon />
            <Label width={103} left={7} shift={-1}>NIFTY 17314.65</Label>
            <Label width={15} size={18} left={3} shift={-2}>▼</Label>
            <Label width={11} shift={-1}>...</Label>
          </Bookmark>
          <Bookmark $left={34}>
            <StudentIcon />
            <Label width={128} left={7} shift={-1}>Student Dashboard</Label>
          </Bookmark>
          <Spacer />
          <Divider $width={3} />
          <Bookmark $left={19}>
            <Folder />
            <Label width={94} left={10} shift={-1}>All Bookmarks</Label>
          </Bookmark>
        </Bookmarks>
      </ChromeBack>
    </>
  );
}

function WebPage() {
  return (
    <Viewport>
      <Page>
        <Join>Join 4,000+ companies already growing</Join>
        <Logos>
          <Boltshift />
          <Lightbox />
          <FeatherDev />
          <Spherule />
          <GlobalBank />
          <Nietzsche />
        </Logos>
        <Eyebrow>Features</Eyebrow>
        <Heading>Analytics that feels like it’s from the future</Heading>
        <Lead>
          Powerful, self-serve product and growth analytics to help you convert, engage, and retain more users. Trusted by
          over 4,000 startups.
        </Lead>
        <Cards>
          {features.map((f) => (
            <Card key={f.title}>
              <IconBox>{f.icon}</IconBox>
              <CardTitle>{f.title}</CardTitle>
              <CardText>{f.text}</CardText>
            </Card>
          ))}
          <Card />
          <Card />
          <Card />
        </Cards>
      </Page>
      <ScrollTrack>
        <Arrow $up />
        <ScrollThumb />
        <Arrow />
      </ScrollTrack>
    </Viewport>
  );
}

const white = "#ffffff";

function TaskbarRow() {
  return (
    <Taskbar>
      <Weather>
        <Sun />
        <Stack>
          <Label width={32} color={white} shift={-1}>28°C</Label>
          <Label width={42} color="#c0c0c0" shift={-1}>Sunny</Label>
        </Stack>
      </Weather>
      <WindowsIcon />
      <SearchBox>
        <svg width="20" height="20" viewBox="0 0 20 20" fill="none" stroke="#e4e4e4" strokeWidth="2">
          <circle cx="9" cy="8.5" r="7.2" />
          <path d="M14 13.8L18.5 18.3" strokeWidth="2.4" />
        </svg>
        <Label width={52} size={17} color="#d2d2d2" left={12} shift={1}>Search</Label>
        <Spacer />
        <Pebbles />
      </SearchBox>
      <AppSlot><TaskViewIcon /></AppSlot>
      <AppSlot><CopilotIcon /></AppSlot>
      <AppSlot><StoreIcon /></AppSlot>
      <AppSlot $mark="open"><ExplorerIcon /></AppSlot>
      <AppSlot><FirefoxIcon /></AppSlot>
      <AppSlot><MailIcon /></AppSlot>
      <AppSlot><SyncIcon /></AppSlot>
      <AppSlot $mark="open"><EdgeIcon /></AppSlot>
      <AppSlot><WpsIcon /></AppSlot>
      <AppSlot $mark="active">
        <ActiveTile><ChromeIcon /></ActiveTile>
      </AppSlot>
      <Tray>
        <svg width="16" height="16" viewBox="0 0 16 16" fill="none" stroke="#fff" strokeWidth="1.7">
          <path d="M1.5 11L8 4.5L14.5 11" />
        </svg>
        <Stack $align="center" $left={25}>
          <Label width={29} color={white}>ENG</Label>
          <Label width={15} color={white}>IN</Label>
        </Stack>
        <TrayIcons>
          <svg width="20" height="20" viewBox="0 0 20 20" fill="none" stroke="#fff" strokeWidth="1.4">
            <path d="M.8 7.6A13 13 0 0 1 19.2 7.6M3.6 10.4A9 9 0 0 1 16.4 10.4M6.3 13.2A5.2 5.2 0 0 1 13.7 13.2" />
            <circle cx="10" cy="15.5" r="1.8" fill="#fff" stroke="none" />
          </svg>
          <svg width="20" height="20" viewBox="0 0 20 20" fill="none" stroke="#fff" strokeWidth="1.4" strokeLinejoin="round">
            <path d="M.8 7.5H4L8.5 3.5V16.5L4 12.5H.8Z" />
            <path d="M11 7.2Q13 10 11 12.8M13.5 5Q17 10 13.5 15M16 2.8Q21.6 10 16 17.2" />
          </svg>
          <svg width="20" height="20" viewBox="0 0 20 20" fill="none" stroke="#fff" strokeWidth="1.3">
            <rect x="1" y="4" width="16" height="12" rx="2.5" />
            <path d="M7 6H15.3V14H3V12Z" fill="#fff" stroke="none" />
            <path d="M17.5 8H19.5V12H17.5Z" fill="#fff" stroke="none" />
            <path d="M4 0L0 6.5H2.8L1.6 11L6.6 4.3H3.7Z" fill="#fff" stroke="#1c1c1c" strokeWidth="0.7" />
          </svg>
        </TrayIcons>
        <Stack $align="flex-end">
          <Label width={35} color={white} shift={-1}>15:43</Label>
          <Label width={77} color={white} shift={-1}>07-01-2025</Label>
        </Stack>
      </Tray>
    </Taskbar>
  );
}

export default function App() {
  return (
    <Screen>
      <GlobalStyle />
      <BrowserChrome />
      <WebPage />
      <TaskbarRow />
    </Screen>
  );
}
